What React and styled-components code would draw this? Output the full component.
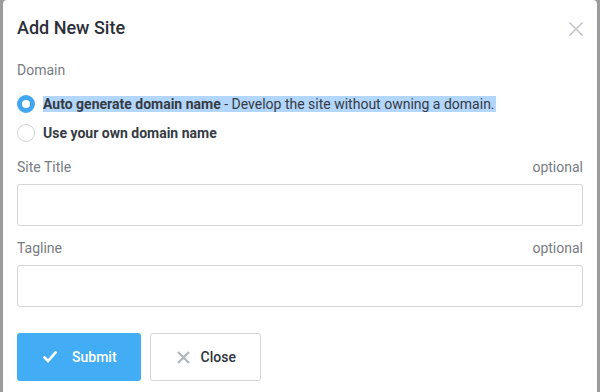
import React from "react";
import styled, { createGlobalStyle } from "styled-components";

const Global = createGlobalStyle`
  html, body { margin: 0; padding: 0; }
  body {
    background: #9c9c9c;
    font-family: Roboto, "Liberation Sans", Arial, sans-serif;
    overflow: hidden;
  }
  * { box-sizing: border-box; }
`;

const Dialog = styled.div`
  margin: 0 3px;
  height: 392px;
  background: #fff;
  border-radius: 4px 4px 0 0;
  padding: 16px 14px 0;
  display: flex;
  flex-direction: column;
`;

const Header = styled.div`
  display: flex;
  align-items: flex-start;
  justify-content: space-between;
  height: 24px;
`;

const Title = styled.h2`
  margin: 0;
  font-size: 18px;
  line-height: 24px;
  font-weight: 500;
  color: #2c3038;
`;

const CloseIcon = styled.button`
  border: none;
  background: none;
  padding: 0;
  margin: 6px 0 0;
  width: 14px;
  height: 14px;
  display: flex;
  cursor: pointer;
`;

const Label = styled.div`
  font-size: 14px;
  line-height: 20px;
  color: #787c82;
  display: flex;
  justify-content: space-between;
  margin-top: ${(p) => p.$mt || 0}px;
`;

const RadioGroup = styled.div`
  display: flex;
  flex-direction: column;
  gap: 9px;
  margin-top: 14px;
`;

const RadioRow = styled.label`
  display: flex;
  align-items: center;
  height: 20px;
  gap: 8px;
  font-size: 14px;
  line-height: 16px;
  color: #363b43;
`;

const RadioDot = styled.span`
  width: 18px;
  height: 18px;
  border-radius: 50%;
  flex: none;
  background: #fff;
  border: ${(p) => (p.$checked ? "5px solid #42a7f0" : "1px solid #d4d4d4")};
`;

const RadioText = styled.span`
  background: ${(p) => (p.$selected ? "#b3d6fd" : "transparent")};
  padding-right: 1px;
`;

const Strong = styled.strong`
  font-weight: 700;
`;

const Input = styled.input`
  display: block;
  width: 100%;
  height: 42px;
  margin-top: 7px;
  border: 1px solid #d6d6d6;
  border-radius: 3px;
  background: #fff;
  outline: none;
  font: inherit;
`;

const Actions = styled.div`
  display: flex;
  gap: 9px;
  margin-top: 26px;
`;

const Button = styled.button`
  height: 48px;
  display: flex;
  align-items: center;
  padding: 0 24px 0 26px;
  border-radius: 3px;
  font-family: Roboto, "Liberation Sans", Arial, sans-serif;
  font-size: 14px;
  font-weight: 500;
  gap: ${(p) => (p.$primary ? 15 : 11)}px;
  background: ${(p) => (p.$primary ? "#42acf4" : "#fff")};
  color: ${(p) => (p.$primary ? "#fff" : "#2f333a")};
  border: ${(p) => (p.$primary ? "none" : "1px solid #d6d6d6")};
  cursor: pointer;
`;

export default function App() {
  return (
    <>
      <Global />
      <Dialog>
        <Header>
          <Title>Add New Site</Title>
          <CloseIcon aria-label="Close">
            <svg width="14" height="14" viewBox="0 0 14 14">
              <path d="M0.5 0.5 L13.5 13.5 M13.5 0.5 L0.5 13.5" stroke="#b9bcc1" strokeWidth="1.3" fill="none" />
            </svg>
          </CloseIcon>
        </Header>

        <Label $mt={20}>Domain</Label>
        <RadioGroup>
          <RadioRow>
            <RadioDot $checked />
            <RadioText $selected>
              <Strong>Auto generate domain name</Strong> - Develop the site without owning a domain.
            </RadioText>
          </RadioRow>
          <RadioRow>
            <RadioDot />
            <RadioText>
              <Strong>Use your own domain name</Strong>
            </RadioText>
          </RadioRow>
        </RadioGroup>

        <Label $mt={14}>
          <span>Site Title</span>
          <span>optional</span>
        </Label>
        <Input />

        <Label $mt={12}>
          <span>Tagline</span>
          <span>optional</span>
        </Label>
        <Input />

        <Actions>
          <Button $primary>
            <svg width="14" height="12" viewBox="0 0 14 12">
              <path d="M1.5 6.5 L5 10 L12.5 1.5" stroke="#fff" strokeWidth="2.6" fill="none" strokeLinecap="square" />
            </svg>
            Submit
          </Button>
          <Button>
            <svg width="13" height="13" viewBox="0 0 13 13">
              <path d="M1 1 L12 12 M12 1 L1 12" stroke="#b4b8bd" strokeWidth="2.4" fill="none" />
            </svg>
            Close
          </Button>
        </Actions>
      </Dialog>
    </>
  );
}
